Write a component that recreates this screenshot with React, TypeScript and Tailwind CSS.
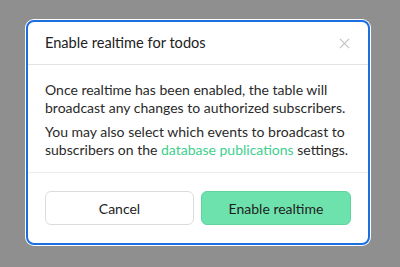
import React from "react";

export default function App() {
  return (
    <div
      className="w-[400px] h-[267px] bg-[#8f8f8f] flex items-start justify-start pt-[20px] pl-[26px]"
      style={{ fontFamily: "Lato, 'Noto Sans', sans-serif" }}
    >
      <div className="w-[344px] h-[225px] bg-white rounded-[8px] border-2 border-[#1b6fe0] shadow-[0_0_0_1px_#ffffff] flex flex-col overflow-hidden">
        <div className="h-[43px] shrink-0 flex items-center justify-between pl-[17px] pr-[18px] border-b border-[#e2e2e2]">
          <span className="text-[14.6px] text-[#222]">Enable realtime for todos</span>
          <svg width="11" height="11" viewBox="0 0 12 12" className="text-[#c4c4c4]">
            <path d="M1 1L11 11M11 1L1 11" stroke="currentColor" strokeWidth="1.3" />
          </svg>
        </div>
        <div className="px-[17px] pt-[16px] pb-[13px] text-[14px] leading-[18px] text-[#2a2a2a] flex flex-col gap-[6px] border-b border-[#ececec]">
          <p>Once realtime has been enabled, the table will broadcast any changes to authorized subscribers.</p>
          <p>
            You may also select which events to broadcast to subscribers on the{" "}
            <span className="text-[#3ecf8e]">database publications</span> settings.
          </p>
        </div>
        <div className="flex-1 flex items-center gap-[7px] px-[17px]">
          <button className="w-[149px] h-[34px] rounded-[6px] border border-[#dcdcdc] bg-white text-[14px] text-[#222]">
            Cancel
          </button>
          <button className="w-[150px] h-[34px] rounded-[6px] border border-[#5fd59d] bg-[#6ee2ad] text-[14px] text-[#1e1e1e]">
            Enable realtime
          </button>
        </div>
      </div>
    </div>
  );
}
